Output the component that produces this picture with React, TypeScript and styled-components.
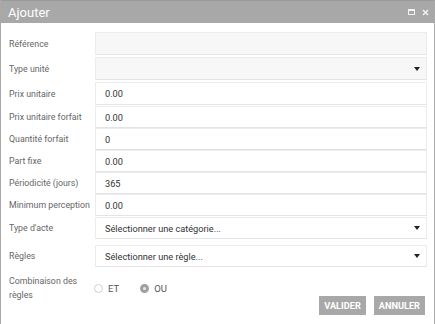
import { createGlobalStyle } from 'styled-components';
import styled from 'styled-components';

const GlobalStyle = createGlobalStyle`
  html, body { margin: 0; padding: 0; background: #fff; }
  body { font-family: Roboto, "Liberation Sans", sans-serif; }
`;

const Dialog = styled.div`
  width: 435px;
  height: 324px;
  box-sizing: border-box;
  border-left: 1px solid #a9a9a9;
  border-right: 1px solid #a9a9a9;
  display: flex;
  flex-direction: column;
  background: #fff;
`;

const TitleBar = styled.div`
  height: 23px;
  background: #a8a8a8;
  border-top: 1px solid #9a9a9a;
  box-sizing: border-box;
  display: flex;
  align-items: center;
  justify-content: space-between;
  padding: 0 5px 0 7px;
  color: #fff;
  font-size: 13px;
`;

const TitleIcons = styled.div`
  display: flex;
  align-items: center;
  gap: 7px;
`;

const Body = styled.div`
  padding: 9px 7px 0 7px;
  display: flex;
  flex-direction: column;
`;

const Row = styled.div<{ $mt?: number }>`
  display: flex;
  align-items: center;
  margin-top: ${p => p.$mt ?? 1}px;
`;

const Label = styled.div`
  width: 86px;
  flex-shrink: 0;
  padding-left: 1px;
  font-size: 8.8px;
  color: #666;
  line-height: 14px;
`;

const Field = styled.div<{ $disabled?: boolean; $h?: number }>`
  flex: 1;
  height: ${p => p.$h ?? 22}px;
  box-sizing: border-box;
  border: 1px solid #ececec;
  border-bottom-color: #e4e4e4;
  background: ${p => (p.$disabled ? '#f7f7f7' : '#fff')};
  display: flex;
  align-items: center;
  justify-content: space-between;
  padding: 0 6px 0 9px;
  font-size: 9.2px;
  color: #333;
`;

const Arrow = styled.span`
  width: 0;
  height: 0;
  border-left: 3px solid transparent;
  border-right: 3px solid transparent;
  border-top: 4px solid #222;
`;

const RadioGroup = styled.div`
  display: flex;
  align-items: center;
  gap: 21px;
  margin-left: -1px;
`;

const RadioItem = styled.label`
  display: flex;
  align-items: center;
  gap: 5px;
  font-size: 9.5px;
  color: #555;
`;

const RadioCircle = styled.span<{ $checked?: boolean }>`
  width: 9px;
  height: 9px;
  box-sizing: border-box;
  border-radius: 50%;
  border: ${p => (p.$checked ? '3px solid #a0a0a0' : '1px solid #cfcfcf')};
  background: ${p => (p.$checked ? '#e8e8e8' : '#fff')};
`;

const Footer = styled.div`
  display: flex;
  justify-content: flex-end;
  gap: 8px;
  padding-right: 2px;
  margin-top: -6px;
`;

const Button = styled.button`
  height: 19px;
  padding: 0 5px;
  border: none;
  background: #a8a8a8;
  color: #fff;
  font-family: Roboto, "Liberation Sans", sans-serif;
  font-weight: 700;
  font-size: 9.2px;
`;

type FieldDef = { label: string; value?: string; disabled?: boolean; select?: boolean; mt?: number; h?: number };

const fields: FieldDef[] = [
  { label: 'Référence', disabled: true, mt: 0, h: 23 },
  { label: 'Type unité', disabled: true, select: true, mt: 2, h: 23 },
  { label: 'Prix unitaire', value: '0.00', mt: 2, h: 23 },
  { label: 'Prix unitaire forfait', value: '0.00', mt: 1 },
  { label: 'Quantité forfait', value: '0', mt: 0 },
  { label: 'Part fixe', value: '0.00', mt: 0 },
  { label: 'Périodicité (jours)', value: '365', mt: 0 },
  { label: 'Minimum perception', value: '0.00', mt: 0 },
  { label: "Type d'acte", value: 'Sélectionner une catégorie...', select: true, mt: 1 },
  { label: 'Règles', value: 'Sélectionner une règle...', select: true, mt: 6 },
];

export default function App() {
  return (
    <>
      <GlobalStyle />
      <Dialog>
        <TitleBar>
          <span>Ajouter</span>
          <TitleIcons>
            <svg width="7" height="6" viewBox="0 0 7 6">
              <rect x="0.5" y="0.5" width="6" height="5" fill="none" stroke="#f2f2f2" strokeWidth="1" />
              <rect x="0.5" y="0.5" width="6" height="1.5" fill="#f2f2f2" />
            </svg>
            <svg width="7" height="7" viewBox="0 0 7 7">
              <path d="M1 1 L6 6 M6 1 L1 6" stroke="#f2f2f2" strokeWidth="1.5" />
            </svg>
          </TitleIcons>
        </TitleBar>
        <Body>
          {fields.map(f => (
            <Row key={f.label} $mt={f.mt}>
              <Label>{f.label}</Label>
              <Field $disabled={f.disabled} $h={f.h}>
                <span>{f.value ?? ''}</span>
                {f.select && <Arrow />}
              </Field>
            </Row>
          ))}
          <Row $mt={7}>
            <Label>
              Combinaison des
              <br />
              règles
            </Label>
            <RadioGroup>
              <RadioItem>
                <RadioCircle />
                ET
              </RadioItem>
              <RadioItem>
                <RadioCircle $checked />
                OU
              </RadioItem>
            </RadioGroup>
          </Row>
          <Footer>
            <Button>VALIDER</Button>
            <Button>ANNULER</Button>
          </Footer>
        </Body>
      </Dialog>
    </>
  );
}
